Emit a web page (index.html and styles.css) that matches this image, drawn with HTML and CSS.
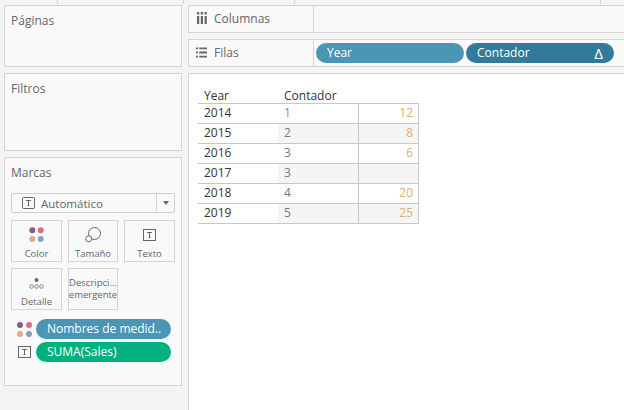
FILE: index.html
```html
<!DOCTYPE html>
<html lang="es">
<head>
<meta charset="utf-8">
<title>Tabla</title>
<link rel="stylesheet" href="styles.css">
</head>
<body>
<div class="top-strip"><i class="t1"></i><i class="t2"></i><i class="t3"></i><i class="t4"></i></div>
<div class="app">
  <aside class="side">
    <section class="card pages"><h2>Páginas</h2></section>
    <section class="card filters"><h2>Filtros</h2></section>
    <section class="card marks">
      <h2>Marcas</h2>
      <div class="select">
        <svg class="t-icon" width="14" height="12" viewBox="0 0 14 12"><rect x=".5" y=".5" width="12" height="11" rx="1" fill="none" stroke="#666"/><path d="M4 3.5h5M6.5 3.5v5M5.5 8.5h2" fill="none" stroke="#666"/></svg>
        <span class="select-label">Automático</span>
        <span class="select-arrow"></span>
      </div>
      <div class="mark-grid">
        <div class="mbtn">
          <svg width="16" height="16" viewBox="0 0 16 16"><circle cx="3.3" cy="3.3" r="3" fill="#7b6288"/><circle cx="11.7" cy="3.3" r="3" fill="#e2688a"/><circle cx="3.3" cy="12" r="3" fill="#e0ac8c"/><circle cx="11.7" cy="12" r="3" fill="#7fa5c4"/></svg>
          <span>Color</span>
        </div>
        <div class="mbtn">
          <svg width="16" height="16" viewBox="0 0 16 16"><circle cx="9.5" cy="6.5" r="6" fill="none" stroke="#666"/><circle cx="3.7" cy="11.8" r="3" fill="#f9f9f9" stroke="#666"/></svg>
          <span>Tamaño</span>
        </div>
        <div class="mbtn">
          <svg width="14" height="16" viewBox="0 0 14 16"><rect x=".5" y="2.5" width="12" height="11" fill="none" stroke="#666"/><path d="M4 5.5h5M6.5 5.5v5M5.5 10.5h2" fill="none" stroke="#666"/></svg>
          <span>Texto</span>
        </div>
        <div class="mbtn">
          <svg width="15" height="16" viewBox="0 0 15 16"><circle cx="7.5" cy="5" r="2" fill="#666"/><circle cx="2.5" cy="11.5" r="1.8" fill="none" stroke="#666" stroke-width=".8"/><circle cx="7.5" cy="11.5" r="1.8" fill="none" stroke="#666" stroke-width=".8"/><circle cx="12.5" cy="11.5" r="1.8" fill="none" stroke="#666" stroke-width=".8"/></svg>
          <span>Detalle</span>
        </div>
        <div class="mbtn mbtn-text"><span>Descripci...</span><span>emergente</span></div>
      </div>
      <div class="encodings">
        <div class="enc">
          <svg width="16" height="15" viewBox="0 0 16 15"><circle cx="3" cy="3" r="3" fill="#7b6288"/><circle cx="12" cy="3" r="3" fill="#e2688a"/><circle cx="3" cy="12" r="3" fill="#f0a77f"/><circle cx="12" cy="12" r="3" fill="#8f9cc4"/></svg>
          <span class="pill pill-blue">Nombres de medid..</span>
        </div>
        <div class="enc">
          <svg width="14" height="12" viewBox="0 0 14 12"><rect x=".5" y=".5" width="12" height="11" fill="none" stroke="#666"/><path d="M4 3.5h5M6.5 3.5v5M5.5 8.5h2" fill="none" stroke="#666"/></svg>
          <span class="pill pill-green">SUMA(Sales)</span>
        </div>
      </div>
    </section>
  </aside>
  <main class="main">
    <div class="shelf columns">
      <div class="shelf-label">
        <svg width="11" height="12" viewBox="-1 0 11 12"><path d="M0 0h2.2v2.5H0zM3.8 0H6v2.5H3.8zM7.6 0h2.2v2.5H7.6zM0 4h2.2v8H0zM3.8 4H6v8H3.8zM7.6 4h2.2v8H7.6z" fill="#666"/></svg>
        <span>Columnas</span>
      </div>
    </div>
    <div class="shelf rows">
      <div class="shelf-label">
        <svg width="11" height="11" viewBox="0 0 12 11"><path d="M0 0h2v2H0zM3.5 0H12v2H3.5zM0 4.5h2v2H0zM3.5 4.5H12v2H3.5zM0 9h2v2H0zM3.5 9H12v2H3.5z" fill="#666"/></svg>
        <span>Filas</span>
      </div>
      <div class="shelf-pills">
        <span class="pill pill-year">Year</span>
        <span class="pill pill-count">Contador<b>Δ</b></span>
      </div>
    </div>
    <div class="view">
      <div class="table">
        <div class="hd">Year</div><div class="hd">Contador</div><div class="hd"></div>
        <div class="c y">2014</div><div class="c n first">1</div><div class="c v">12</div>
        <div class="c y">2015</div><div class="c n s">2</div><div class="c v s">8</div>
        <div class="c y">2016</div><div class="c n">3</div><div class="c v">6</div>
        <div class="c y">2017</div><div class="c n s">3</div><div class="c v s"></div>
        <div class="c y">2018</div><div class="c n">4</div><div class="c v">20</div>
        <div class="c y">2019</div><div class="c n s">5</div><div class="c v s">25</div>
      </div>
    </div>
  </main>
</div>
</body>
</html>
```
FILE: styles.css
```css
* { box-sizing: border-box; }
html, body { margin: 0; padding: 0; }
body {
  width: 624px; height: 410px; overflow: hidden;
  background: #f4f4f4;
  font-family: "Open Sans", "Noto Sans", sans-serif;
  font-size: 12px; color: #666;
}
.top-strip { height: 5px; display: flex; }
.top-strip i { display: block; width: 1px; height: 4px; background: #d4d4d4; }
.top-strip .t1 { margin-left: 57px; }
.top-strip .t2 { margin-left: 125px; }
.top-strip .t3 { margin-left: 110px; }
.top-strip .t4 { margin-left: 305px; }
.app { display: flex; height: 405px; padding-left: 4px; gap: 6px; }
.side { width: 178px; display: flex; flex-direction: column; gap: 6px; }
.card, .shelf, .view { background: #f9f9f9; border: 1px solid #d4d4d4; }
.card h2 { margin: 0; font-size: 12px; font-weight: 400; color: #666; line-height: 16px; }
.card { padding: 7px 6px; }
.pages { height: 62px; }
.filters { height: 78px; }
.marks { height: 229px; }
.select {
  margin-top: 12px; height: 20px; width: 164px; background: #f9f9f9;
  border: 1px solid #cfcfcf; border-radius: 2px; display: flex; align-items: center; padding-left: 10px;
  font-size: 11.5px;
}
.select-label { margin-left: 5px; flex: 1; }
.select-arrow { width: 18px; height: 18px; border-left: 1px solid #d4d4d4; display: flex; align-items: center; justify-content: center; }
.select-arrow::after { content: ""; border-left: 3.5px solid transparent; border-right: 3.5px solid transparent; border-top: 4px solid #666; }
.mark-grid { display: grid; grid-template-columns: 51px 50px 51px; gap: 6px; margin-top: 7px; width: 164px; }
.mbtn {
  height: 42px; border: 1px solid #d4d4d4; display: flex; flex-direction: column;
  align-items: center; justify-content: flex-start; font-size: 9.5px; line-height: 14px;
}
.mbtn svg { margin-top: 6px; flex: none; }
.mbtn span { margin-top: 4px; }
.mbtn-text { justify-content: center; line-height: 12px; }
.mbtn-text span { margin: 0; }
.encodings { display: flex; flex-direction: column; gap: 3px; margin-top: 9px; }
.enc { display: flex; align-items: center; height: 20px; padding-left: 6px; }
.enc svg { width: 16px; flex: none; margin-right: 3px; }
.pill {
  display: flex; align-items: center; height: 20px; border-radius: 10px;
  color: #fff; font-size: 12px; padding: 0 0 1px 11px;
}
.pill-blue { width: 135px; background: #4a96b4; }
.pill-green { width: 135px; background: #00b180; }
.main { flex: 1; display: flex; flex-direction: column; gap: 6px; }
.shelf { height: 28px; display: flex; align-items: center; border-right: 0; }
.shelf-label { width: 125px; height: 100%; display: flex; align-items: center; gap: 7px; padding: 0 0 2px 7px; border-right: 1px solid #d4d4d4; flex: none; }
.shelf-pills { display: flex; gap: 2px; padding-left: 2px; }
.pill-year { width: 148px; background: #4a96b4; }
.pill-count { width: 148px; background: #33799a; justify-content: space-between; padding-right: 11px; }
.pill-count b { font-weight: 400; font-size: 15px; line-height: 20px; }
.view { flex: 1; background: #fff; border-bottom: 0; border-right: 0; padding: 10px 0 0 9px; }
.table { display: grid; grid-template-columns: 80px 80px 61px; grid-auto-rows: 20px; width: 221px; }
.hd { height: 17px; color: #333; padding-left: 6px; line-height: 17px; margin-top: 3px; white-space: nowrap; border-bottom: 1px solid #c8c8c8; }
.c { border-bottom: 1px solid #c8c8c8; line-height: 18px; }
.y { color: #333; padding-left: 6px; }
.n { color: #777; padding-left: 6px; }
.first { color: #7d9a80; }
.v { color: #e3ad71; text-align: right; padding-right: 5px; border-left: 1px solid #c8c8c8; border-right: 1px solid #c8c8c8; }
.s { background: #f5f5f5; }
```
